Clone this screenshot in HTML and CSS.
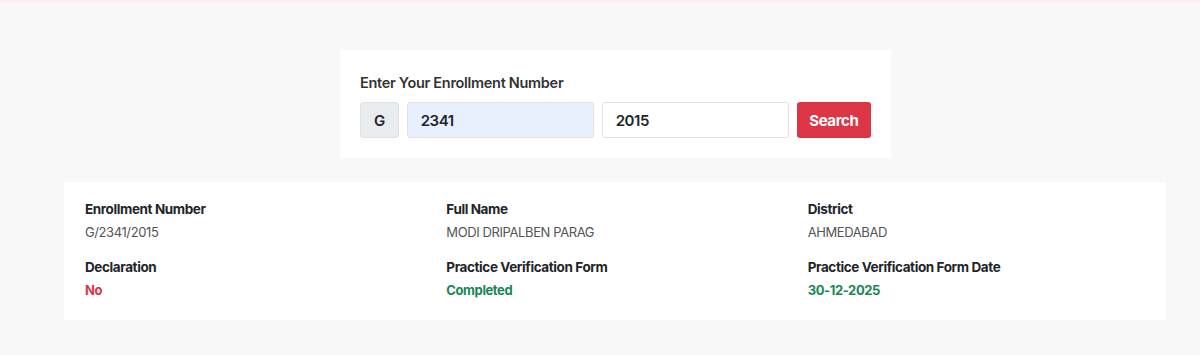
FILE: index.html
```html
<!DOCTYPE html>
<html lang="en">
<head>
    <meta charset="UTF-8">
    <meta name="viewport" content="width=device-width, initial-scale=1.0">
    <title>Enrollment Search</title>
    <link rel="stylesheet" href="styles.css">
</head>
<body>
    <div class="topbar"></div>

    <div class="page">
        <div class="search-card">
            <label class="search-label" for="enrollNo">Enter Your Enrollment Number</label>
            <form class="search-row" onsubmit="return false">
                <span class="prefix">G</span>
                <input type="text" id="enrollNo" class="field field-filled" value="2341">
                <input type="text" id="enrollYear" class="field" value="2015">
                <button type="submit" class="btn-search">Search</button>
            </form>
        </div>

        <div class="details-card">
            <div class="item">
                <div class="item-label">Enrollment Number</div>
                <div class="item-value">G/2341/2015</div>
            </div>
            <div class="item">
                <div class="item-label">Full Name</div>
                <div class="item-value">MODI DRIPALBEN PARAG</div>
            </div>
            <div class="item">
                <div class="item-label">District</div>
                <div class="item-value">AHMEDABAD</div>
            </div>
            <div class="item">
                <div class="item-label">Declaration</div>
                <div class="item-value status-no">No</div>
            </div>
            <div class="item">
                <div class="item-label">Practice Verification Form</div>
                <div class="item-value status-ok">Completed</div>
            </div>
            <div class="item">
                <div class="item-label">Practice Verification Form Date</div>
                <div class="item-value status-ok">30-12-2025</div>
            </div>
        </div>
    </div>
</body>
</html>
```

FILE: styles.css
```css
body {
    margin: 0;
    background-color: #f8f8f8;
    font-family: Inter, "Liberation Sans", Arial, sans-serif;
    color: #212529;
    letter-spacing: -0.4px;
}

/* thin pink strip at the top */
.topbar {
    height: 3px;
    background: linear-gradient(#ffecec, #fff5f5);
}

.page {
    padding: 47px 34px 0 64px;
}

/* Search box */
.search-card {
    width: 511px;
    margin: 0 0 24px 276px;
    background-color: #fff;
    padding: 24px 20px 20px;
}

.search-label {
    display: block;
    font-size: 14.5px;
    font-weight: 600;
    color: #333;
    margin-bottom: 11px;
    letter-spacing: -0.3px;
}

.search-row {
    display: flex;
    gap: 8px;
    margin: 0;
}

.prefix {
    width: 39px;
    height: 36px;
    box-sizing: border-box;
    display: flex;
    align-items: center;
    justify-content: center;
    background-color: #e9ecef;
    border: 1px solid #dee2e6;
    border-radius: 3px;
    font-size: 15px;
    font-weight: 600;
}

.field {
    width: 187px;
    height: 36px;
    box-sizing: border-box;
    padding: 0 13px;
    border: 1px solid #dee2e6;
    border-radius: 3px;
    font-family: inherit;
    font-size: 15px;
    font-weight: 600;
    letter-spacing: -0.4px;
    color: #212529;
    background-color: #fff;
    outline: none;
}

.field-filled {
    background-color: #e8f0fe;
}

.btn-search {
    width: 75px;
    height: 36px;
    border: none;
    border-radius: 3px;
    background-color: #dc3545;
    color: #fff;
    font-family: inherit;
    font-size: 15px;
    font-weight: 700;
    letter-spacing: -0.4px;
    cursor: pointer;
}

/* Result details */
.details-card {
    background-color: #fff;
    padding: 19px 21px 22px;
    display: grid;
    grid-template-columns: repeat(3, 1fr);
    column-gap: 24px;
    row-gap: 19px;
}

.item-label {
    font-size: 13.5px;
    font-weight: 700;
    color: #212529;
    margin-bottom: 7px;
}

.item-value {
    font-size: 13px;
    color: #555;
}

.status-no {
    color: #dc3545;
    font-weight: 700;
}

.status-ok {
    color: #198754;
    font-weight: 700;
}
```
